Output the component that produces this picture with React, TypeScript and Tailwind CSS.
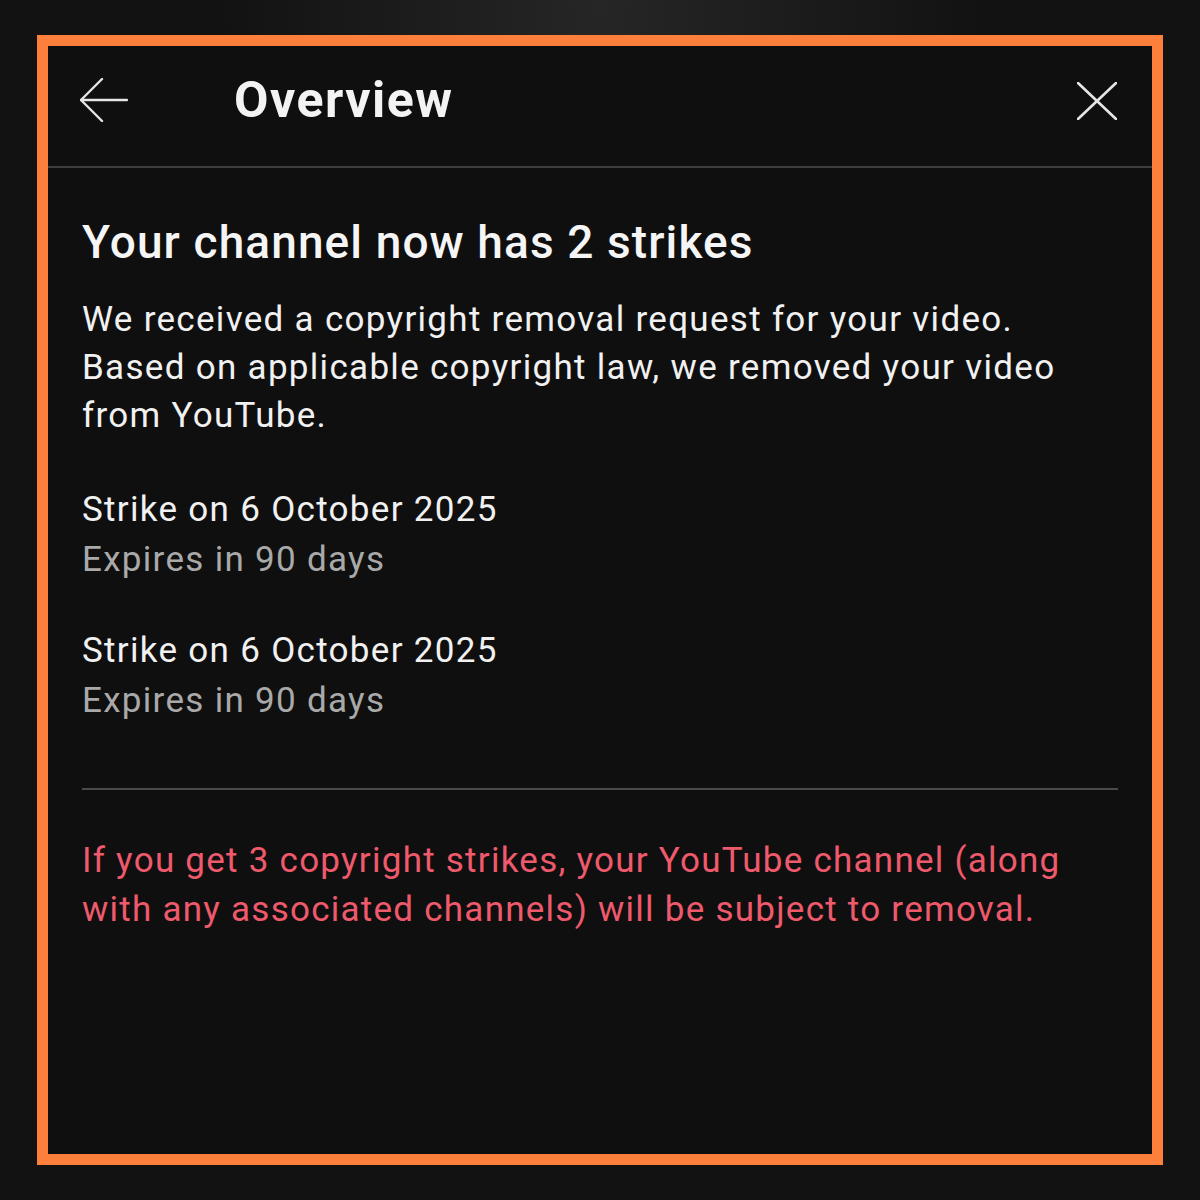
const font = { fontFamily: "Roboto, 'Liberation Sans', sans-serif" };

const BackArrow = () => (
  <svg width="48" height="44" viewBox="0 0 48 44" fill="none" stroke="#e6e6e6" strokeWidth="2.4" strokeLinecap="round">
    <line x1="1" y1="22" x2="47" y2="22" />
    <polyline points="22,1 1,22 22,43" strokeLinejoin="round" />
  </svg>
);

const CloseIcon = () => (
  <svg width="40" height="38" viewBox="0 0 40 38" fill="none" stroke="#e6e6e6" strokeWidth="2.6" strokeLinecap="round">
    <line x1="1" y1="1" x2="39" y2="37" />
    <line x1="39" y1="1" x2="1" y2="37" />
  </svg>
);

const Strike = ({ date }: { date: string }) => (
  <div className="text-[35px] leading-[50px] tracking-[1.3px]">
    <div className="text-[#f1f1f1]">Strike on {date}</div>
    <div className="text-[#a9a9a9]">Expires in 90 days</div>
  </div>
);

export default function App() {
  return (
    <div
      className="w-[1200px] h-[1200px] bg-[#121212] bg-[radial-gradient(ellipse_at_top,#262626_0%,#121212_45%)] pt-[35px] pl-[37px]"
      style={font}
    >
      <div className="w-[1126px] h-[1130px] border-[11px] border-[#fd7f3c] bg-[#0f0f0f] flex flex-col">
        {/* Header */}
        <div className="h-[120px] flex items-center pb-[12px] pl-[32px] pr-[35px]">
          <BackArrow />
          <div className="ml-[106px] text-[50px] font-bold text-[#f3f3f3] tracking-[0.03em] leading-none">
            Overview
          </div>
          <div className="ml-auto pt-[2px]">
            <CloseIcon />
          </div>
        </div>
        <div className="h-[2px] bg-[#3e3e3e]" />

        {/* Body */}
        <div className="px-[34px]">
          <h1 className="mt-[46px] text-[46px] leading-[56px] font-medium text-[#f5f5f5] tracking-[1.1px]">
            Your channel now has 2 strikes
          </h1>
          <p className="mt-[26px] text-[35px] leading-[48px] text-[#f1f1f1] tracking-[1.3px]">
            <span className="block whitespace-nowrap">We received a copyright removal request for your video.</span>
            <span className="block whitespace-nowrap">Based on applicable copyright law, we removed your video</span>
            <span className="block whitespace-nowrap">from YouTube.</span>
          </p>

          <div className="mt-[45px] flex flex-col gap-[41px]">
            <Strike date="6 October 2025" />
            <Strike date="6 October 2025" />
          </div>

          <div className="mt-[62px] h-[2px] bg-[#4a4a4a]" />

          <p className="mt-[46px] text-[35px] leading-[49px] text-[#ee5a6c] tracking-[1.25px]">
            <span className="block whitespace-nowrap">If you get 3 copyright strikes, your YouTube channel (along</span>
            <span className="block whitespace-nowrap">with any associated channels) will be subject to removal.</span>
          </p>
        </div>
      </div>
    </div>
  );
}
